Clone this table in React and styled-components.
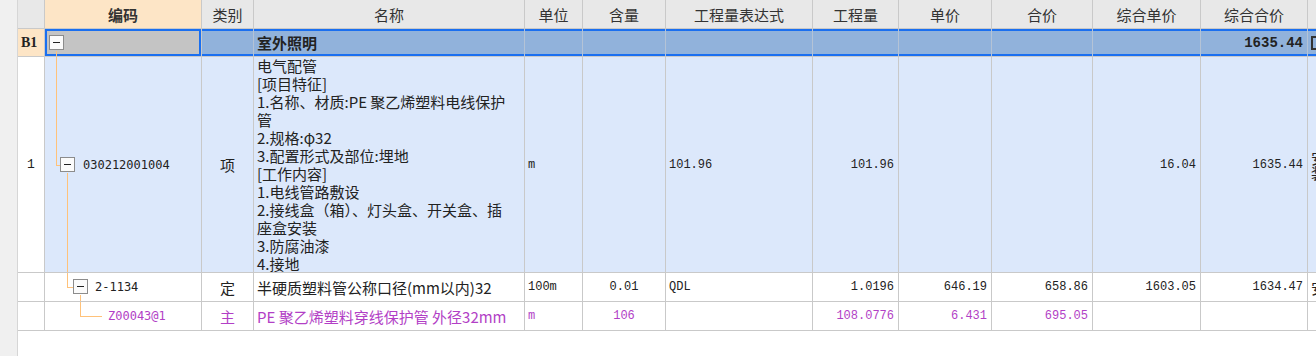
import React from 'react';
import styled, { createGlobalStyle, css } from 'styled-components';

const GlobalStyle = createGlobalStyle`
  html, body { margin: 0; padding: 0; background: #ffffff; overflow: hidden; }
  body { font-family: "Noto Sans CJK SC", "Noto Sans", sans-serif; color: #222; }
`;

const COLS = '27px 157px 52px 271px 58px 83px 147px 86px 93px 101px 108px 107px 24px';
const LINE = '#c9c9c9';
const TREE = '#ffc27a';
const PURPLE = '#b23fc6';
const SELECT = '#1a6ff0';

const Page = styled.div`
  display: flex;
  width: 1316px;
  height: 356px;
  overflow: hidden;
`;

const Gutter = styled.div`
  flex: 0 0 17px;
  background: #f0f0f0;
  border-right: 1px solid #d6d6d6;
`;

const Sheet = styled.div`
  flex: none;
  display: flex;
  flex-direction: column;
`;

const Row = styled.div`
  display: grid;
  grid-template-columns: ${COLS};
  height: ${p => p.$h}px;
`;

const Cell = styled.div`
  box-sizing: border-box;
  border-right: 1px solid ${LINE};
  border-bottom: 1px solid ${LINE};
  display: flex;
  align-items: center;
  justify-content: ${p => (p.$align === 'right' ? 'flex-end' : p.$align === 'center' ? 'center' : 'flex-start')};
  padding: 0 ${p => (p.$align === 'right' ? 4 : 3)}px 0 3px;
  background: ${p => p.$bg || 'transparent'};
  color: ${p => (p.$purple ? PURPLE : '#222')};
  font-size: 15px;
  white-space: nowrap;
  overflow: hidden;
  position: relative;
  ${p => p.$mono && css`
    font-family: "Liberation Mono", "DejaVu Sans Mono", monospace;
    font-size: 12px;
  `}
  ${p => p.$bold && css`font-weight: 700;`}
  ${p => p.$sel === 'cell' && css`box-shadow: inset 0 0 0 2px ${SELECT};`}
  ${p => p.$sel === 'band' && css`
    box-shadow: inset 0 2px 0 ${SELECT}, inset 0 -2px 0 ${SELECT};
    border-right-color: #b4c3d6;
  `}
`;

const HeadCell = styled(Cell)`
  justify-content: center;
  background: ${p => (p.$accent ? '#fde5c6' : '#e8e8e8')};
  color: #333;
  font-weight: ${p => (p.$strong ? 700 : 400)};
`;

const RowNo = styled(Cell)`
  justify-content: ${p => (p.$accent ? 'flex-start' : 'center')};
  background: ${p => (p.$accent ? '#fde5c6' : '#ffffff')};
  font-family: ${p => (p.$accent ? '"Liberation Serif", serif' : '"Liberation Mono", monospace')};
  font-size: ${p => (p.$accent ? 14 : 13)}px;
  font-weight: ${p => (p.$accent ? 700 : 400)};
`;

const NameBlock = styled(Cell)`
  flex-direction: column;
  align-items: flex-start;
  justify-content: flex-start;
  line-height: 18px;
`;

const BigSum = styled(Cell)`
  font-family: "Liberation Mono", monospace;
  font-size: 14px;
  font-weight: 700;
`;

const Stem = styled.span`
  position: absolute;
  left: ${p => p.$x}px;
  top: ${p => (p.$down ? 'calc(50% + 8px)' : '0')};
  bottom: ${p => (p.$down ? '-1px' : '50%')};
  width: 1px;
  background: ${TREE};
`;

const Branch = styled.span`
  position: absolute;
  left: ${p => p.$x}px;
  width: ${p => p.$w}px;
  top: 50%;
  height: 1px;
  background: ${TREE};
`;

const Toggle = styled.span`
  position: absolute;
  left: ${p => p.$x}px;
  top: 50%;
  margin-top: -8px;
  width: 15px;
  height: 15px;
  box-sizing: border-box;
  border: 1px solid #8c8c8c;
  background: #fbfbfb;
  &::after {
    content: '';
    position: absolute;
    left: 3px;
    right: 3px;
    top: 6px;
    height: 1px;
    background: #222;
  }
`;

const Code = styled.span`
  margin-left: ${p => p.$x - 3}px;
  font-family: "DejaVu Sans Mono", "Liberation Mono", monospace;
  font-size: 12px;
`;

const Peek = styled.span`
  display: block;
  width: 15px;
  white-space: normal;
  line-height: 15px;
  font-size: 15px;
`;

const PeekBox = styled.span`
  width: 10px;
  height: 14px;
  box-sizing: border-box;
  border: 2px solid #333;
`;

function TreeCode({ inX, boxX, leafTo, textX, children, ...rest }) {
  return (
    <Cell {...rest}>
      {inX != null && <Stem $x={inX} />}
      {inX != null && <Branch $x={inX} $w={(boxX ?? leafTo) - inX} />}
      {boxX != null && <Toggle $x={boxX} />}
      {boxX != null && <Stem $x={boxX + 7} $down />}
      {children && <Code $x={textX}>{children}</Code>}
    </Cell>
  );
}

const headers = ['编码', '类别', '名称', '单位', '含量', '工程量表达式', '工程量', '单价', '合价', '综合单价', '综合合价'];

const nameLines = [
  '电气配管',
  '[项目特征]',
  '1.名称、材质:PE 聚乙烯塑料电线保护',
  '管',
  '2.规格:φ32',
  '3.配置形式及部位:埋地',
  '[工作内容]',
  '1.电线管路敷设',
  '2.接线盒（箱）、灯头盒、开关盒、插',
  '座盒安装',
  '3.防腐油漆',
  '4.接地',
];

export default function App() {
  const light = '#dce8fb';
  const band = '#91b2db';
  return (
    <>
      <GlobalStyle />
      <Page>
        <Gutter />
        <Sheet>
          <Row $h={29}>
            <HeadCell />
            {headers.map((h, i) => (
              <HeadCell key={h} $accent={i === 0} $strong={i === 0}>{h}</HeadCell>
            ))}
            <HeadCell />
          </Row>

          <Row $h={28}>
            <RowNo $accent>B1</RowNo>
            <TreeCode boxX={4} $bg="#c4c4c4" $sel="cell" />
            <Cell $bg={band} $sel="band" />
            <Cell $bg={band} $sel="band" $bold>室外照明</Cell>
            <Cell $bg={band} $sel="band" />
            <Cell $bg={band} $sel="band" />
            <Cell $bg={band} $sel="band" />
            <Cell $bg={band} $sel="band" />
            <Cell $bg={band} $sel="band" />
            <Cell $bg={band} $sel="band" />
            <Cell $bg={band} $sel="band" />
            <BigSum $bg={band} $sel="band" $align="right">1635.44</BigSum>
            <Cell $bg={band} $sel="band"><PeekBox /></Cell>
          </Row>

          <Row $h={216}>
            <RowNo>1</RowNo>
            <TreeCode inX={11} boxX={15} textX={38} $bg={light}>030212001004</TreeCode>
            <Cell $bg={light} $align="center">项</Cell>
            <NameBlock $bg={light}>
              {nameLines.map(l => <div key={l}>{l}</div>)}
            </NameBlock>
            <Cell $bg={light} $mono>m</Cell>
            <Cell $bg={light} />
            <Cell $bg={light} $mono>101.96</Cell>
            <Cell $bg={light} $mono $align="right">101.96</Cell>
            <Cell $bg={light} />
            <Cell $bg={light} />
            <Cell $bg={light} $mono $align="right">16.04</Cell>
            <Cell $bg={light} $mono $align="right">1635.44</Cell>
            <Cell $bg={light}><Peek>安装</Peek></Cell>
          </Row>

          <Row $h={29}>
            <RowNo />
            <TreeCode inX={22} boxX={28} textX={50}>2-1134</TreeCode>
            <Cell $align="center">定</Cell>
            <Cell>半硬质塑料管公称口径(mm以内)32</Cell>
            <Cell $mono>100m</Cell>
            <Cell $mono $align="center">0.01</Cell>
            <Cell $mono>QDL</Cell>
            <Cell $mono $align="right">1.0196</Cell>
            <Cell $mono $align="right">646.19</Cell>
            <Cell $mono $align="right">658.86</Cell>
            <Cell $mono $align="right">1603.05</Cell>
            <Cell $mono $align="right">1634.47</Cell>
            <Cell>安</Cell>
          </Row>

          <Row $h={29}>
            <RowNo />
            <TreeCode inX={35} leafTo={57} textX={63} $purple>Z00043@1</TreeCode>
            <Cell $align="center" $purple>主</Cell>
            <Cell $purple>PE 聚乙烯塑料穿线保护管 外径32mm</Cell>
            <Cell $mono $purple>m</Cell>
            <Cell $mono $align="center" $purple>106</Cell>
            <Cell />
            <Cell $mono $align="right" $purple>108.0776</Cell>
            <Cell $mono $align="right" $purple>6.431</Cell>
            <Cell $mono $align="right" $purple>695.05</Cell>
            <Cell />
            <Cell />
            <Cell />
          </Row>
        </Sheet>
      </Page>
    </>
  );
}
